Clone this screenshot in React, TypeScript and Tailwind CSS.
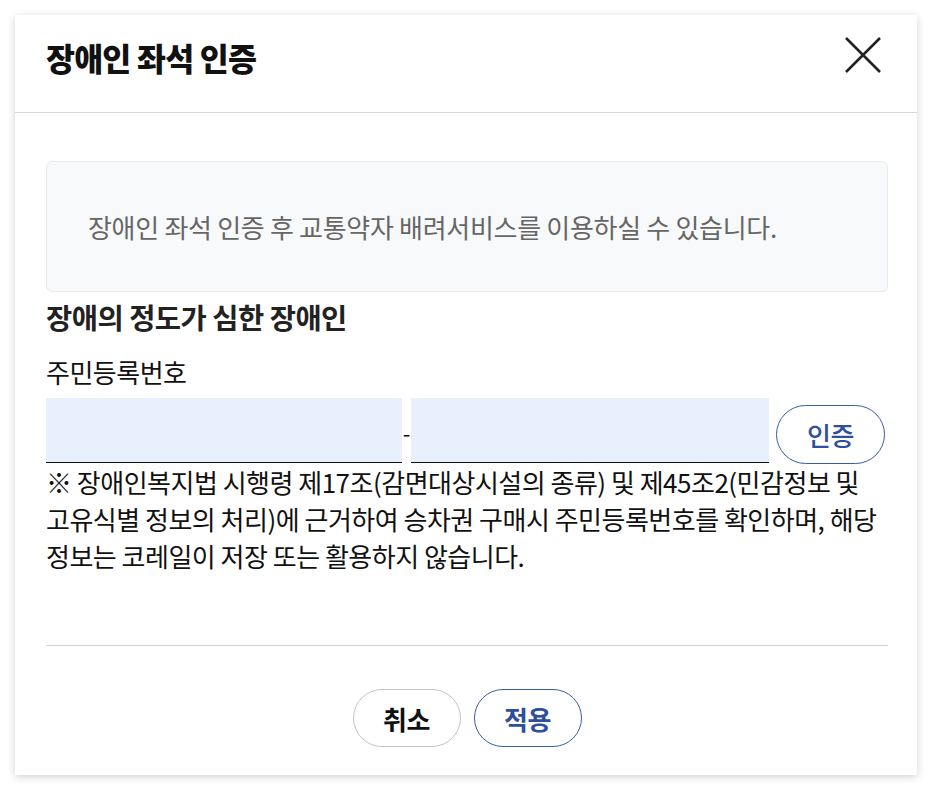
export default function App() {
  return (
    <div className="min-h-[792px] bg-white pt-[15px] pl-[15px] font-['Noto_Sans_CJK_KR','Noto_Sans',sans-serif]">
      <div className="w-[902px] bg-white shadow-[0_2px_8px_rgba(0,0,0,0.18)]">
        {/* header */}
        <div className="flex h-[98px] items-start justify-between border-b border-[#d9d9d9] pl-[31px] pr-[36px] pt-[21px]">
          <h1 className="text-[31.5px] font-black leading-[42px] tracking-[-0.8px] text-[#111]">
            장애인 좌석 인증
          </h1>
          <button className="mt-[1px] flex h-[36px] w-[36px] items-center justify-center">
            <svg width="36" height="36" viewBox="0 0 36 36" fill="none" stroke="#222" strokeWidth="2.6">
              <path d="M1 1L35 35M35 1L1 35" />
            </svg>
          </button>
        </div>

        {/* body */}
        <div className="pl-[31px] pr-[29px] pt-[48px]">
          <div className="flex h-[131px] items-center rounded-[6px] border border-[#e8eaed] bg-[#f8f9fb] pl-[41px]">
            <p className="text-[26px] leading-[36px] tracking-[-0.3px] text-[#666]">
              장애인 좌석 인증 후 교통약자 배려서비스를 이용하실 수 있습니다.
            </p>
          </div>

          <h2 className="mt-[6px] text-[28.5px] font-bold leading-[38px] tracking-[-0.5px] text-[#222]">
            장애의 정도가 심한 장애인
          </h2>

          <p className="mt-[18px] text-[26px] leading-[36px] tracking-[-0.5px] text-[#111]">
            주민등록번호
          </p>

          <div className="mt-[8px] flex items-end">
            <input className="h-[65px] w-[356px] border-b border-[#111] bg-[#e8f0fe] outline-none" />
            <span className="mb-[26px] w-[9px] text-center text-[22px] leading-[10px] text-[#111]">-</span>
            <input className="h-[65px] w-[358px] border-b border-[#111] bg-[#e8f0fe] outline-none" />
            <button className="mb-[-1px] ml-[7px] h-[59px] w-[109px] rounded-full border border-[#3a5ba8] text-[26px] font-medium tracking-[-0.5px] text-[#2d4f9e]">
              인증
            </button>
          </div>

          <p className="break-keep text-[26px] leading-[37px] tracking-[-0.5px] text-[#111]">
            ※ 장애인복지법 시행령 제17조(감면대상시설의 종류) 및 제45조2(민감정보 및 고유식별 정보의 처리)에 근거하여 승차권 구매시 주민등록번호를 확인하며, 해당 정보는 코레일이 저장 또는 활용하지 않습니다.
          </p>

          <div className="mt-[71px] border-t border-[#d4d4d4]" />

          <div className="flex justify-center gap-[13px] pb-[28px] pt-[43px]">
            <button className="h-[58px] w-[108px] rounded-full border border-[#c4c4c4] text-[26px] font-bold tracking-[-0.5px] text-[#111]">
              취소
            </button>
            <button className="h-[58px] w-[108px] rounded-full border border-[#3a5ba8] text-[26px] font-bold tracking-[-0.5px] text-[#2d4f9e]">
              적용
            </button>
          </div>
        </div>
      </div>
    </div>
  );
}
